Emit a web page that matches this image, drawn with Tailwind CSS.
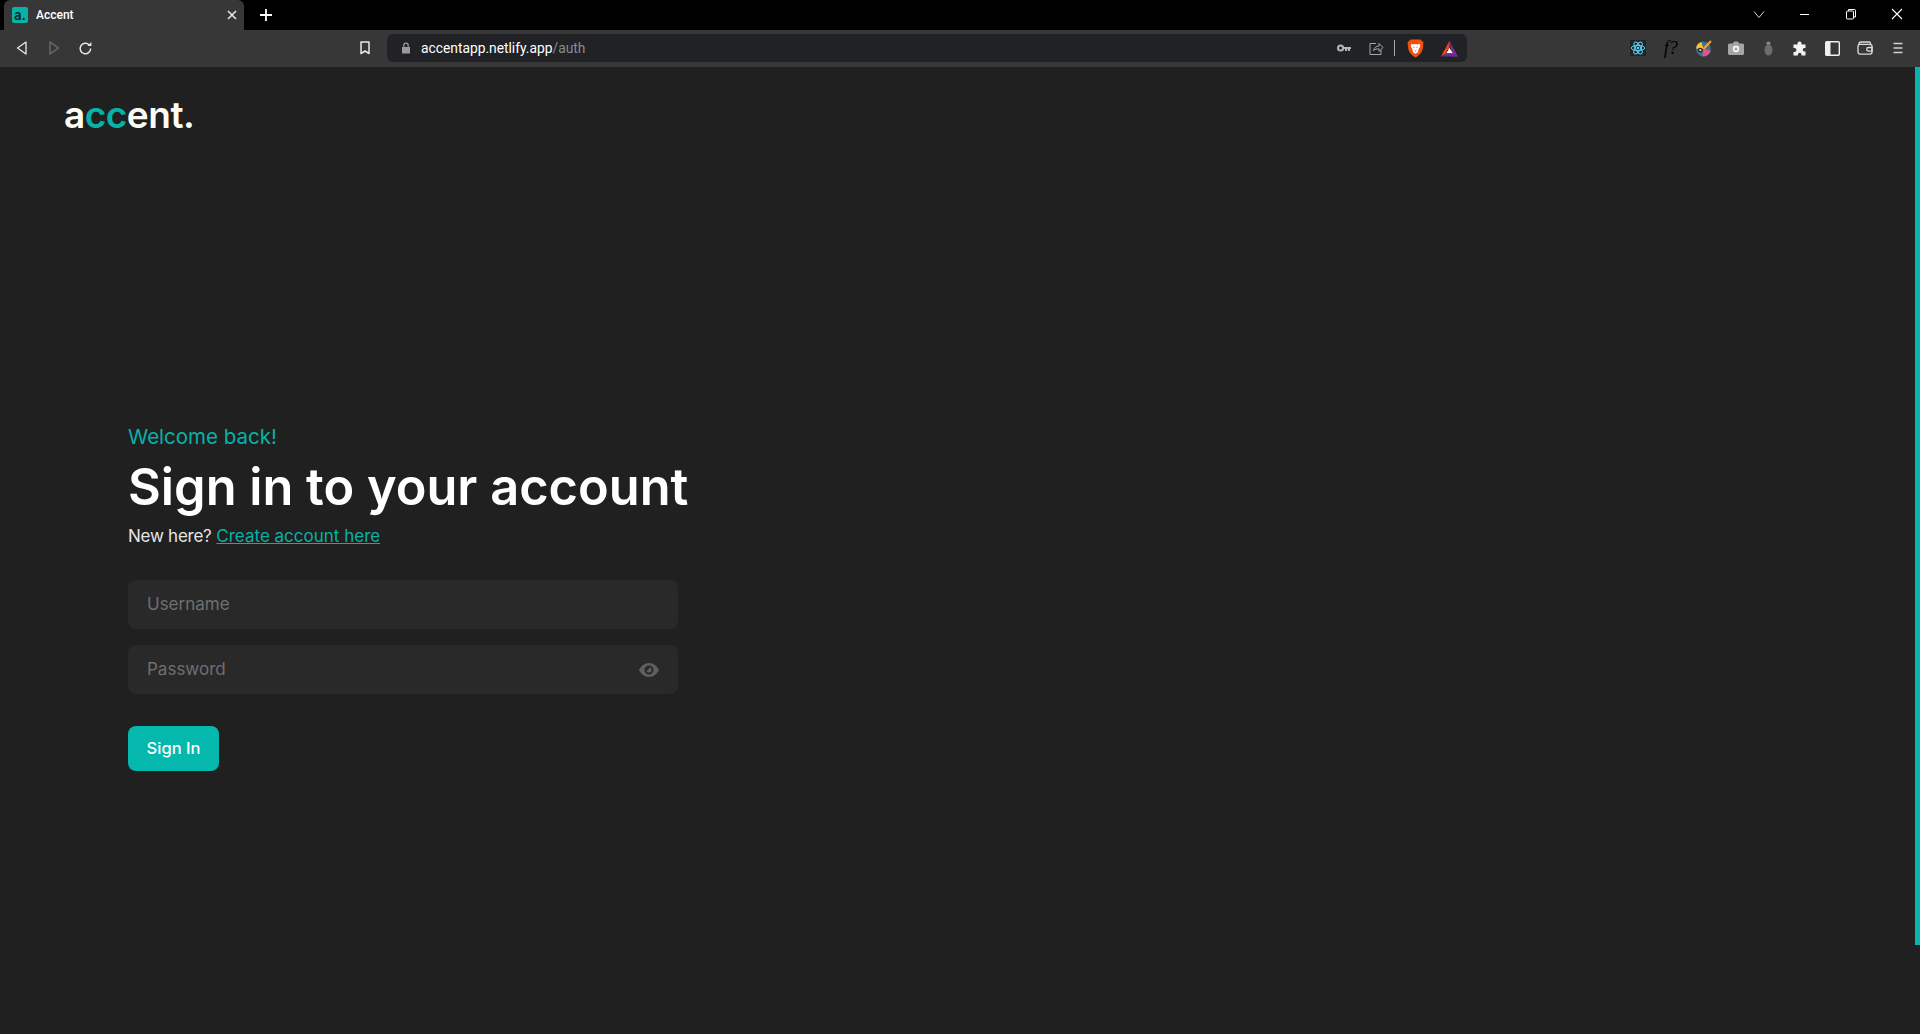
<!DOCTYPE html>
<html lang="en">
<head>
<meta charset="utf-8">
<title>Accent</title>
<script src="https://cdn.jsdelivr.net/npm/@tailwindcss/browser@4"></script>
</head>
<body class="relative h-[1034px] w-[1920px] overflow-hidden bg-[#202020] font-['Inter',sans-serif]">

<!-- Tab strip -->
<div class="flex h-[30px] items-center bg-black pl-1">
  <div class="flex h-[30px] w-[240px] items-center rounded-t-md bg-[#373737] pl-2 pr-[6px]">
    <div class="flex h-4 w-4 items-center justify-center rounded-[2px] bg-[#05b3a8] text-[13px] leading-none font-bold text-[#0c2a2a]">a.</div>
    <span class="ml-2 font-['Roboto',sans-serif] text-xs font-medium text-white">Accent</span>
    <svg class="ml-auto h-3 w-3 text-[#e6e6e6]" viewBox="0 0 12 12" fill="none" stroke="currentColor" stroke-width="1.6"><path d="M2 2l8 8M10 2l-8 8"/></svg>
  </div>
  <svg class="ml-[15px] h-[14px] w-[14px] text-white" viewBox="0 0 14 14" fill="none" stroke="currentColor" stroke-width="1.8"><path d="M7 1v12M1 7h12"/></svg>
  <div class="mb-[2px] ml-auto flex items-center gap-[34px] pr-[17px]">
    <svg class="h-3 w-3" viewBox="0 0 12 12" fill="none" stroke="#d8d8d8"><path d="M1 3.500l5 6 5-6"/></svg>
    <svg class="h-3 w-3" viewBox="0 0 12 12" fill="none" stroke="#fff"><path d="M1 6.500h9"/></svg>
    <svg class="h-3 w-3" viewBox="0 0 12 12" fill="none" stroke="#fff"><rect x="1.500" y="3" width="7" height="8" rx="1"/><path d="M3.500 3V1.500h6a1 1 0 0 1 1 1V9H8.500"/></svg>
    <svg class="h-3 w-3" viewBox="0 0 12 12" fill="none" stroke="#fff" stroke-width="1.100"><path d="M1 1l10 10M11 1L1 11"/></svg>
  </div>
</div>

<!-- Toolbar -->
<div class="flex h-[37px] items-center bg-[#373737] pb-px">
  <svg class="ml-[15px] h-[14px] w-[14px]" viewBox="0 0 14 14" fill="none" stroke="#e8e8e8" stroke-width="1.300" stroke-linejoin="round"><path d="M11 1v12L2.500 7z"/></svg>
  <svg class="ml-[18px] h-[14px] w-[14px]" viewBox="0 0 14 14" fill="none" stroke="#6e6e75" stroke-width="1.300" stroke-linejoin="round"><path d="M3 1v12L11.500 7z"/></svg>
  <svg class="ml-[17px] h-[15px] w-[15px]" viewBox="0 0 14 14" fill="none" stroke="#e8e8e8" stroke-width="1.400"><path d="M11.800 7a4.900 4.900 0 1 1-1.500-3.500"/><path d="M12.500 1v3.700H8.800z" fill="#e8e8e8" stroke="none"/></svg>
  <svg class="ml-[266px] h-[14px] w-3" viewBox="0 0 12 14" fill="none" stroke="#e8e8e8" stroke-width="1.500" stroke-linejoin="round"><path d="M2 1h8v11.500L6 10l-4 2.500z"/></svg>
  <div class="ml-4 flex h-7 w-[1080px] items-center rounded-md bg-[#212226] pl-[14px]">
    <svg class="h-3 w-[10px]" viewBox="0 0 10 12"><path fill="#9a9a9a" d="M1 5h8v6.500H1z"/><path d="M2.800 5V3.400a2.200 2.200 0 0 1 4.400 0V5" fill="none" stroke="#9a9a9a" stroke-width="1.200"/></svg>
    <span class="ml-[10px] font-['Roboto',sans-serif] text-[13.8px] text-white">accentapp.netlify.app<span class="text-[#8b8b8f]">/auth</span></span>
    <svg class="ml-auto h-[10px] w-[14px]" viewBox="0 0 14 10"><circle cx="3.600" cy="5" r="2.600" fill="none" stroke="#b5b5b5" stroke-width="2"/><path fill="#b5b5b5" d="M6 4h8v2h-1v2h-2V6.200h-1V8H8V6H6z"/></svg>
    <svg class="ml-[18px] h-[15px] w-[15px]" viewBox="0 0 15 15" fill="none" stroke="#a8a8a8"><path d="M7 2.500H1v11h11V9"/><path d="M4.500 9.500c.5-3 3-4.500 5.500-4.500V2.500l4 4-4 3.800V7.800c-2 0-4 .3-5.500 1.700z" stroke-linejoin="round"/></svg>
    <div class="ml-[10px] h-4 w-px bg-[#a8a8a8]"></div>
    <svg class="ml-[12px] h-[19px] w-[17px]" viewBox="0 0 16 18"><path fill="#f1510f" d="M3.500 .5h9L15.500 3 15 8.500c-.5 4-3.500 7-7 9-3.500-2-6.500-5-7-9L.5 3z"/><path fill="#fff" d="M4 4.500l2 .8L8 4.700l2 .6 2-.8.5 2.500-1.500 2.500-.7 3L8 14l-2.300-1.500-.7-3-1.500-2.500z"/><path fill="#f1510f" d="M5.600 7.200l1.600.6-.4 1zm4.800 0L8.800 7.800l.4 1zM7 11h2l-1 1z"/></svg>
    <svg class="ml-[17px] h-[17px] w-[17px]" viewBox="0 0 16 15"><path fill="#7b2d8e" d="M8 .5L16 15h-5.500z"/><path fill="#f1510f" d="M8 .5L0 15l4.800-3z"/><path fill="#e8402a" d="M8 .5L3 11l5-3z"/><path fill="#fff" d="M8 7l3 5H5z"/><path fill="#662d91" d="M0 15l4.500-2.500h7L16 15z"/></svg>
    <div class="w-[9px]"></div>
  </div>

  <div class="ml-[155px] flex items-center">
    <div class="flex w-[32.5px] justify-center"><svg class="h-4 w-4" viewBox="0 0 15 15"><rect width="15" height="15" fill="#20232a"/><g fill="none" stroke="#61dafb" stroke-width=".9"><ellipse cx="7.500" cy="7.500" rx="6.300" ry="2.500"/><ellipse cx="7.500" cy="7.500" rx="6.300" ry="2.500" transform="rotate(60 7.500 7.500)"/><ellipse cx="7.500" cy="7.500" rx="6.300" ry="2.500" transform="rotate(120 7.500 7.500)"/></g><circle cx="7.500" cy="7.500" r="1.200" fill="#61dafb"/></svg></div>
    <div class="flex w-[32.5px] justify-center font-['Liberation_Serif',serif] text-[18px] leading-none font-medium text-black italic">f?</div>
    <div class="flex w-[32.5px] justify-center"><svg class="h-[17px] w-[17px]" viewBox="0 0 16 16"><circle cx="8" cy="8.500" r="7" fill="#3e7087"/><path fill="#ee4d8e" d="M8 8.500l6.800 1.500A7 7 0 0 1 7 15.400z"/><path fill="#f8c33a" d="M8 8.500L1 8A7 7 0 0 1 6 1.800z"/><circle cx="5" cy="9.500" r="2.300" fill="#222"/><circle cx="5" cy="9.500" r="1" fill="#ddd"/><path stroke="#f2a23a" stroke-width="2" d="M8 8.500l7-7.500"/></svg></div>
    <div class="flex w-[32.5px] justify-center"><svg class="h-[14px] w-4" viewBox="0 0 16 14"><path fill="#a5a5a5" d="M1.500 2.500h3.500L6 .5h4l1 2h3.500A1.500 1.500 0 0 1 16 4v8.500a1.500 1.500 0 0 1-1.500 1.500h-13A1.500 1.500 0 0 1 0 12.500V4a1.500 1.500 0 0 1 1.500-1.500z"/><circle cx="8" cy="8" r="2.400" fill="none" stroke="#fff" stroke-width="1.500"/></svg></div>
    <div class="flex w-[32.5px] justify-center"><svg class="h-[15px] w-[9px]" viewBox="0 0 9 15"><ellipse cx="4.500" cy="2.200" rx="2" ry="1.600" fill="#8c8c8c"/><ellipse cx="4.500" cy="9" rx="4" ry="5.500" fill="#6d6d6d"/></svg></div>
    <div class="flex w-[32.5px] justify-center"><svg class="mr-[3px] h-[15px] w-[15px]" viewBox="0 0 15 15"><path fill="#f3f3f3" d="M5.500 2.500a2 2 0 0 1 4 0V3.500h4v3.500h-1a1.800 1.800 0 0 0 0 3.600h1v3.900h-4v-1a1.800 1.800 0 0 0-3.600 0v1H1.500V11h1a2 2 0 0 0 0-4h-1V3.500h4z"/></svg></div>
    <div class="flex w-[32.5px] justify-center"><svg class="mr-[2px] h-[15px] w-[15px]" viewBox="0 0 15 15"><rect x=".7" y=".7" width="13.600" height="13.600" rx="1" fill="none" stroke="#f0f0f0" stroke-width="1.400"/><rect x="1" y="1" width="4.500" height="13" fill="#f0f0f0"/></svg></div>
    <div class="flex w-[32.5px] justify-center"><svg class="mr-[2px] h-[14px] w-4" viewBox="0 0 16 14" fill="none" stroke="#dcdcdc" stroke-width="1.300"><path d="M2 3.500V3a2 2 0 0 1 2-2h8a1.500 1.500 0 0 1 1.500 1.500V3.500"/><rect x="1" y="3.300" width="14" height="9.800" rx="2"/><path d="M15 6.500h-3.500a1.800 1.800 0 0 0 0 3.600H15z"/></svg></div>
    <div class="flex w-[32.5px] justify-center"><svg class="h-[14px] w-3" viewBox="0 0 12 14" stroke="#cfcfcf" stroke-width="1.600"><path d="M1.500 2.500h9M1.500 7h9M1.500 11.500h9"/></svg></div>
  </div>
</div>

<!-- Page -->
<main class="text-white">
  <div class="pt-[25px] pl-16 text-[37px] leading-[45px] font-semibold tracking-[-0.5px] text-[#fdfdf6]">a<span class="text-[#05b3a8]">cc</span>ent.</div>

  <section class="mt-[286px] ml-32 w-[560px]">
    <p class="text-[20.5px] leading-[28px] font-normal text-[#05b3a8]">Welcome back!</p>
    <h1 class="mt-[7px] text-[50.5px] leading-[58px] font-semibold whitespace-nowrap">Sign in to your account</h1>
    <p class="mt-[8px] text-[17px] leading-6 text-[#e5e5e5]"><span class="tracking-[-0.25px]">New here?</span> <a class="text-[#0ab0a5] underline" href="#">Create account here</a></p>

    <form class="mt-[32px] w-[550px]">
      <div class="flex h-[49px] items-center rounded-lg bg-[#292929] px-[19px] pt-px text-[17px] text-[#6f6f6f]">
        <input class="w-full bg-transparent outline-none placeholder:text-[#6f6f6f]" placeholder="Username">
      </div>
      <div class="mt-4 flex h-[49px] items-center rounded-lg bg-[#292929] px-[19px] pt-px text-[17px] text-[#6f6f6f]">
        <input class="w-full bg-transparent outline-none placeholder:text-[#6f6f6f]" placeholder="Password">
        <svg class="h-4 w-5 shrink-0" viewBox="0 0 20 16"><path fill="#5f5f5f" fill-rule="evenodd" d="M10 1c4.500 0 8 3 10 7-2 4-5.500 7-10 7S2 12 0 8c2-4 5.500-7 10-7zm0 2.500a4.500 4.500 0 1 0 0 9 4.500 4.500 0 0 0 0-9z"/><path fill="#5f5f5f" d="M10 5.500a2.500 2.500 0 1 1-2.500 2.500c1 .5 2.500 0 2.500-2.500z"/></svg>
      </div>
      <button type="button" class="mt-8 h-[45px] w-[91px] rounded-lg bg-[#05b8ad] text-[16.5px] font-medium text-white">Sign In</button>
    </form>
  </section>
</main>

<!-- Custom scrollbar thumb -->
<div class="absolute top-[67px] right-0 h-[878px] w-[5px] bg-[#08b5aa]"></div>
</body>
</html>
